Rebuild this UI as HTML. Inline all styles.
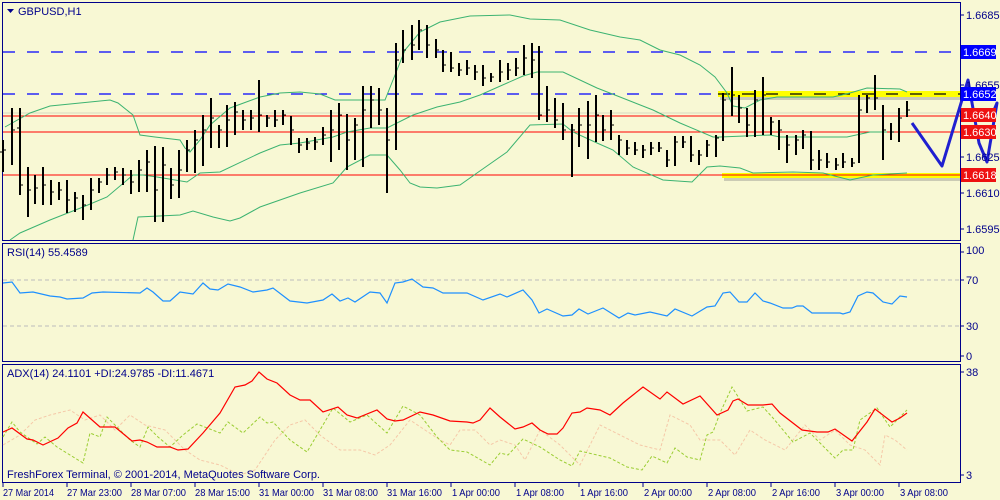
<!DOCTYPE html>
<html><head><meta charset="utf-8"><style>
html,body{margin:0;padding:0;background:#F8F8D4;}
svg{display:block;font-family:"Liberation Sans",Tahoma,sans-serif;}
</style></head><body>
<svg width="1000" height="500" viewBox="0 0 1000 500" xmlns="http://www.w3.org/2000/svg">
<rect width="1000" height="500" fill="#F8F8D4"/>
<rect x="2.5" y="2.5" width="958" height="238" fill="none" stroke="#00008B" stroke-width="1"/>
<rect x="2.5" y="243.5" width="958" height="118" fill="none" stroke="#00008B" stroke-width="1"/>
<rect x="2.5" y="364.5" width="958" height="118" fill="none" stroke="#00008B" stroke-width="1"/>
<line x1="3" y1="113" x2="960" y2="113" stroke="#d8d8c0"/>
<line x1="3" y1="52" x2="960" y2="52" stroke="#0000FF" stroke-dasharray="12,12" stroke-width="1.3"/>
<line x1="3" y1="94" x2="960" y2="94" stroke="#0000FF" stroke-dasharray="12,12" stroke-width="1.3"/>
<line x1="3" y1="116" x2="960" y2="116" stroke="#FF0000"/>
<line x1="3" y1="132" x2="960" y2="132" stroke="#FF0000"/>
<line x1="3" y1="175" x2="960" y2="175" stroke="#FF0000"/>
<rect x="720" y="94" width="240" height="6" fill="#777" opacity="0.35"/>
<rect x="718" y="91" width="242" height="6" fill="#FFFF00"/>
<rect x="724" y="176" width="236" height="5" fill="#777" opacity="0.35"/>
<rect x="722" y="173" width="238" height="5" fill="#FFFF00"/>
<line x1="718" y1="94" x2="960" y2="94" stroke="#000" stroke-dasharray="12,12" stroke-width="1.3"/>
<line x1="722" y1="175" x2="960" y2="175" stroke="#FF0000"/>
<g fill="none" stroke="#3CB371" stroke-width="1">
<polyline points="5,127 30,113 50,106 110,100 118,103 133,115 140,135 155,137 180,140 185,148 190,152 200,140 210,125 230,108 260,97 280,93 300,92 320,94 335,100 375,100 385,100 395,75 405,50 420,32 440,22 470,16 510,15 530,19 560,20 590,30 620,37 640,40 660,50 680,55 700,65 715,77 727,93 733,106 745,108 760,100 777,97 833,97 850,93 867,88 900,89 907,92"/>
<polyline points="10,240 20,233 50,220 83,207 107,197 133,175 143,175 157,177 187,182 200,173 220,172 260,153 280,145 300,143 333,137 347,132 370,128 387,128 413,115 437,107 460,102 480,95 523,76 537,72 563,72 597,88 620,97 653,110 680,123 713,137 720,137 770,135 780,137 847,137 870,132 887,132"/>
<polyline points="133,240 138,217 180,215 193,211 213,217 230,221 240,218 260,207 300,193 333,183 347,167 370,155 387,155 400,170 410,183 420,187 437,188 460,185 477,173 507,152 530,125 563,124 573,132 597,143 613,150 633,167 663,180 692,182 707,167 720,166 740,168 753,173 793,172 823,173 850,180 873,175 907,173"/>
</g>
<path stroke="#000" stroke-width="2" fill="none" d="M3 140V172M12 108V165M20 108V195M28 167V217M35 175V204M43 167V205M51 180V205M59 182V200M67 180V213M75 192V212M83 195V220M91 178V210M99 178V193M107 168V185M115 167V180M123 168V185M131 170V194M139 160V192M147 150V192M155 146V222M163 147V222M171 168V199M179 150V198M187 140V172M195 130V173M203 115V166M211 98V148M219 125V148M227 105V147M235 102V135M243 110V130M251 110V130M259 80V132M267 115V127M275 110V127M283 110V125M291 116V145M299 138V153M307 138V150M315 137V150M323 127V145M331 110V162M339 103V150M347 114V170M355 118V160M363 86V167M371 86V128M379 88V125M387 108V193M396 43V150M403 30V63M412 25V60M419 20V50M427 25V58M436 39V58M443 50V72M451 52V72M459 63V76M467 60V75M475 65V80M483 65V86M491 73V82M500 60V82M508 63V80M516 58V76M524 45V75M532 43V78M539 46V120M547 86V122M555 98V128M563 103V140M572 124V177M579 108V147M588 101V159M596 95V142M603 115V141M611 110V140M619 135V155M627 140V155M635 142V155M643 145V158M651 142V155M659 142V152M667 150V167M675 136V166M683 136V148M691 136V162M699 150V165M707 140V157M716 135V157M723 93V141M732 67V116M739 95V123M747 108V137M755 90V137M763 77V135M771 117V135M779 120V150M787 135V163M796 135V155M803 130V149M811 131V170M819 150V170M827 153V168M836 158V170M843 153V168M852 158V167M859 95V163M867 95V113M875 75V110M883 105V160M891 123V140M899 108V142M907 101V117"/>
<path stroke="#000" stroke-width="1" fill="none" d="M3 152h-3M3 150h3M12 130h3M20 128h-3M20 185h3M28 190h3M35 188h3M43 185h3M51 192h3M59 190h3M67 200h3M75 198h3M83 205h3M91 190h3M99 182h3M107 175h3M115 172h3M123 175h3M131 182h3M139 170h3M147 162h3M155 190h3M163 165h3M171 185h3M179 170h3M187 150h3M195 140h3M203 130h3M211 118h3M219 130h3M227 120h3M235 112h3M243 120h3M251 118h3M259 115h3M267 118h3M275 120h3M283 115h3M291 130h3M299 145h3M307 143h3M315 142h3M323 135h3M331 130h3M339 115h3M347 140h3M355 125h3M363 110h3M371 100h3M379 110h3M387 140h3M396 60h3M403 50h3M412 45h3M419 30h3M427 45h3M436 50h3M443 65h3M451 68h3M459 70h3M467 68h3M475 72h3M483 78h3M491 77h3M500 72h3M508 70h3M516 68h3M524 58h3M532 60h3M539 115h3M547 110h3M555 120h3M563 130h3M572 130h3M579 125h3M588 125h3M596 115h3M603 130h3M611 125h3M619 140h3M627 148h3M635 150h3M643 150h3M651 148h3M659 148h3M667 160h3M675 142h3M683 142h3M691 155h3M699 155h3M707 145h3M716 138h3M723 100h3M732 95h3M739 108h3M747 125h3M755 100h3M763 95h3M771 122h3M779 130h3M787 145h3M796 140h3M803 135h3M811 160h3M819 160h3M827 162h3M836 165h3M843 162h3M852 163h3M859 110h3M867 98h3M875 98h3M883 130h3M891 132h3M899 118h3M907 110h3"/>
<polyline points="912,123 942,166 968,80 979,143 987,162 997,103 990,120 985,118" fill="none" stroke="#2020D0" stroke-width="3" stroke-linejoin="round"/>
<path d="M7 9h7l-3.5 4z" fill="#00008B"/>
<text x="18" y="15" font-size="11" fill="#00008B">GBPUSD,H1</text>
<g font-size="11" fill="#00008B">
<path stroke="#00008B" d="M961 15h3M961 85h3M961 157h3M961 193h3M961 229h3M961 252h3M961 280h3M961 326h3M961 356h3M961 372h3M961 475h3"/>
<text x="966" y="19">1.6685</text>
<text x="966" y="89">1.6655</text>
<text x="966" y="161">1.6625</text>
<text x="966" y="197">1.6610</text>
<text x="966" y="233">1.6595</text>
</g>
<rect x="961" y="45" width="35" height="14" fill="#0000FF"/><text x="963" y="56" font-size="11" fill="#fff">1.6669</text>
<rect x="961" y="87" width="35" height="14" fill="#0000FF"/><text x="963" y="98" font-size="11" fill="#fff">1.6652</text>
<rect x="961" y="108" width="35" height="14" fill="#EE1111"/><text x="963" y="119" font-size="11" fill="#fff">1.6640</text>
<rect x="961" y="125" width="35" height="14" fill="#EE1111"/><text x="963" y="136" font-size="11" fill="#fff">1.6630</text>
<rect x="961" y="168" width="35" height="14" fill="#EE1111"/><text x="963" y="179" font-size="11" fill="#fff">1.6618</text>
<line x1="3" y1="280" x2="960" y2="280" stroke="#bbb" stroke-dasharray="4,3"/>
<line x1="3" y1="326" x2="960" y2="326" stroke="#bbb" stroke-dasharray="4,3"/>
<polyline fill="none" stroke="#1E90FF" stroke-width="1.2" points="3,283 12,282 20,293 33,292 50,296 60,297 67,299 83,298 92,293 103,292 140,293 147,288 153,292 163,301 170,301 180,292 193,294 203,283 210,289 218,290 228,284 240,287 253,292 267,290 273,288 290,301 307,303 323,300 332,294 340,301 348,298 355,302 370,292 380,293 387,303 395,283 403,282 412,279 423,287 433,288 443,293 467,293 483,300 500,294 507,297 523,290 532,300 539,313 547,309 563,316 572,315 579,309 588,314 603,308 619,318 628,313 635,315 650,312 667,316 675,309 692,316 707,307 715,306 723,293 730,292 739,302 747,302 755,293 763,301 770,303 783,308 792,308 797,306 803,306 812,313 840,313 843,314 850,312 858,296 867,292 873,293 883,302 892,304 900,296 907,297"/>
<text x="7" y="256" font-size="11" fill="#00008B">RSI(14) 55.4589</text>
<g font-size="11" fill="#00008B">
<text x="966" y="254">100</text><text x="966" y="284">70</text><text x="966" y="330">30</text><text x="966" y="360">0</text>
<text x="966" y="376">38</text><text x="966" y="479">3</text>
</g>
<polyline fill="none" stroke="#F5C8A8" stroke-width="1" stroke-dasharray="3,2" points="3,445 20,435 35,420 50,415 70,410 85,420 100,415 115,430 130,415 145,425 165,430 185,450 200,460 220,465 240,475 255,470 265,455 275,440 290,425 305,420 320,435 340,450 360,450 375,455 390,445 410,420 425,430 440,440 450,445 460,430 475,430 490,445 500,440 515,445 525,460 540,430 560,445 580,465 600,425 620,435 640,445 660,450 670,415 690,425 700,440 720,440 735,455 750,430 765,440 785,450 805,425 820,440 835,430 850,445 865,450 880,465 885,435 895,440 907,450"/>
<polyline fill="none" stroke="#9ACD32" stroke-width="1" stroke-dasharray="3,2" points="3,437 12,422 20,432 37,444 45,437 57,447 83,463 90,433 100,437 107,417 130,440 140,447 148,427 158,437 170,447 183,435 197,424 220,433 228,422 243,433 260,417 267,423 273,422 290,440 307,452 333,408 350,422 367,415 387,433 403,406 420,415 437,437 450,450 467,452 490,465 500,453 508,455 523,439 540,447 560,460 572,466 580,451 610,458 627,467 642,470 652,456 667,463 675,448 687,457 700,460 707,435 713,432 720,413 732,387 747,411 763,407 773,418 793,442 810,433 835,458 843,450 853,450 860,420 877,408 890,427 907,410"/>
<polyline fill="none" stroke="#FF0000" stroke-width="1.2" points="3,432 12,428 27,439 33,440 43,445 58,438 68,428 77,423 83,412 100,427 115,427 132,441 140,440 147,442 157,447 170,447 178,450 188,449 203,433 220,413 235,387 245,385 252,381 259,372 267,379 277,383 290,395 300,400 310,400 323,412 338,407 347,415 357,418 377,410 387,419 395,421 403,420 420,412 433,415 450,421 467,422 473,423 480,420 490,408 500,417 515,429 523,427 532,423 540,430 548,434 557,434 563,428 572,413 580,412 587,408 600,410 610,415 623,403 633,395 643,387 660,399 667,392 683,404 700,396 717,415 728,410 733,401 738,399 748,405 763,405 772,404 780,413 802,430 817,432 828,432 835,429 852,441 867,422 875,409 892,422 900,418 907,413"/>
<text x="7" y="377" font-size="11" fill="#00008B">ADX(14) 24.1101 +DI:24.9785 -DI:11.4671</text>
<text x="7" y="478" font-size="11" fill="#00008B">FreshForex Terminal, © 2001-2014, MetaQuotes Software Corp.</text>
<path stroke="#00008B" d="M3 483v4M67 483v4M131 483v4M195 483v4M259 483v4M323 483v4M387 483v4M451 483v4M515 483v4M579 483v4M643 483v4M707 483v4M771 483v4M835 483v4M899 483v4"/>
<g font-size="10.5" fill="#00008B" lengthAdjust="spacingAndGlyphs">
<text x="3" y="496" textLength="51" lengthAdjust="spacingAndGlyphs">27 Mar 2014</text>
<text x="67" y="496" textLength="55" lengthAdjust="spacingAndGlyphs">27 Mar 23:00</text>
<text x="131" y="496" textLength="55" lengthAdjust="spacingAndGlyphs">28 Mar 07:00</text>
<text x="195" y="496" textLength="55" lengthAdjust="spacingAndGlyphs">28 Mar 15:00</text>
<text x="259" y="496" textLength="55" lengthAdjust="spacingAndGlyphs">31 Mar 00:00</text>
<text x="323" y="496" textLength="55" lengthAdjust="spacingAndGlyphs">31 Mar 08:00</text>
<text x="387" y="496" textLength="55" lengthAdjust="spacingAndGlyphs">31 Mar 16:00</text>
<text x="452" y="496" textLength="48" lengthAdjust="spacingAndGlyphs">1 Apr 00:00</text>
<text x="516" y="496" textLength="48" lengthAdjust="spacingAndGlyphs">1 Apr 08:00</text>
<text x="580" y="496" textLength="48" lengthAdjust="spacingAndGlyphs">1 Apr 16:00</text>
<text x="644" y="496" textLength="48" lengthAdjust="spacingAndGlyphs">2 Apr 00:00</text>
<text x="708" y="496" textLength="48" lengthAdjust="spacingAndGlyphs">2 Apr 08:00</text>
<text x="772" y="496" textLength="48" lengthAdjust="spacingAndGlyphs">2 Apr 16:00</text>
<text x="836" y="496" textLength="48" lengthAdjust="spacingAndGlyphs">3 Apr 00:00</text>
<text x="900" y="496" textLength="48" lengthAdjust="spacingAndGlyphs">3 Apr 08:00</text>
</g>
</svg>
</body></html>
